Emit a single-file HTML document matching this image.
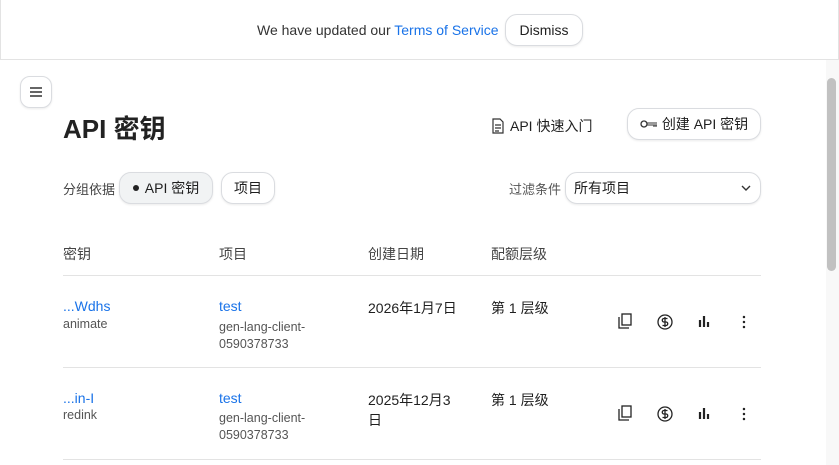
<!DOCTYPE html>
<html><head><meta charset="utf-8"><style>
*{box-sizing:border-box;margin:0;padding:0}
body{width:839px;height:465px;overflow:hidden;background:#fff;font-family:"Liberation Sans","Noto Sans CJK SC",sans-serif;color:#1f1f1f;position:relative}
.a{position:absolute}
.banner{left:0;top:0;width:839px;height:60px;border:1px solid #e3e3e3;border-top:none;background:#fff}
.btn{position:absolute;border:1px solid #dadce0;border-radius:12px;background:#fff;font-size:14px;display:flex;align-items:center;justify-content:center;box-shadow:0 1px 2px rgba(0,0,0,.08)}
.link{color:#1a73e8}
.t{font-size:14px}
.g{color:#444}
.s{font-size:12.5px;color:#555}
.line{position:absolute;left:63px;width:698px;height:1px;background:#e3e3e3}
</style></head><body>
<div class="a banner"></div>
<div class="a t" style="left:257px;top:22px;color:#333">We have updated our <span class="link">Terms of Service</span></div>
<div class="btn" style="left:505px;top:14px;width:78px;height:32px">Dismiss</div>
<div class="a" style="left:826px;top:60px;width:13px;height:405px;background:#f8f8f8"></div>
<div class="a" style="left:827px;top:78px;width:9px;height:193px;background:#c1c1c1;border-radius:5px"></div>
<div class="btn" style="left:20px;top:76px;width:32px;height:32px;border-radius:10px"><svg width="14" height="10"><path d="M1 1h12M1 5h12M1 9h12" stroke="#333" stroke-width="1.4"/></svg></div>
<div class="a" style="left:63px;top:109px;font-size:26px;font-weight:bold;color:#222">API 密钥</div>
<div class="a t" style="left:491px;top:116px;display:flex;align-items:center;gap:5px"><svg width="14" height="16"><path d="M2 1h7l3 3v11H2z M4 7h6M4 10h6M4 13h4" fill="none" stroke="#333" stroke-width="1.2"/></svg>API 快速入门</div>
<div class="btn" style="left:627px;top:108px;width:134px;height:32px;gap:4px"><svg width="18" height="10"><circle cx="4" cy="5" r="3" fill="none" stroke="#333" stroke-width="1.3"/><path d="M7 4h10M7 6h10M14 6v2M16 6v2" stroke="#333" stroke-width="1.1" fill="none"/></svg>创建 API 密钥</div>
<div class="a" style="left:63px;top:179px;font-size:13px;color:#444">分组依据</div>
<div class="btn" style="left:119px;top:172px;width:94px;height:32px;background:#f1f3f4;gap:6px"><span style="width:6px;height:6px;border-radius:3px;background:#222;display:inline-block"></span>API 密钥</div>
<div class="btn" style="left:221px;top:172px;width:54px;height:32px">项目</div>
<div class="a" style="left:509px;top:179px;font-size:13px;color:#555">过滤条件</div>
<div class="btn" style="left:565px;top:172px;width:196px;height:32px;justify-content:space-between;padding:0 8px">所有项目<svg width="12" height="8"><path d="M2 2l4 4 4-4" fill="none" stroke="#333" stroke-width="1.4"/></svg></div>
<div class="a t g" style="left:63px;top:244px">密钥</div>
<div class="a t g" style="left:219px;top:244px">项目</div>
<div class="a t g" style="left:368px;top:244px">创建日期</div>
<div class="a t g" style="left:491px;top:244px">配额层级</div>
<div class="line" style="top:275px"></div>
<div class="a t link" style="left:63px;top:298px">...Wdhs</div>
<div class="a s" style="left:63px;top:317px">animate</div>
<div class="a t link" style="left:219px;top:298px">test</div>
<div class="a s" style="left:219px;top:319px;line-height:17px">gen-lang-client-<br>0590378733</div>
<div class="a t" style="left:368px;top:298px">2026年1月7日</div>
<div class="a t" style="left:491px;top:298px">第 1 层级</div>
<div class="line" style="top:367px"></div>
<div class="a t link" style="left:63px;top:390px">...in-I</div>
<div class="a s" style="left:63px;top:408px">redink</div>
<div class="a t link" style="left:219px;top:390px">test</div>
<div class="a s" style="left:219px;top:410px;line-height:17px">gen-lang-client-<br>0590378733</div>
<div class="a t" style="left:368px;top:390px;line-height:20px">2025年12月3<br>日</div>
<div class="a t" style="left:491px;top:390px">第 1 层级</div>
<div class="line" style="top:459px"></div>
<svg class="a" style="left:610px;top:310px" width="150" height="120">
<g id="r" fill="none" stroke="#222" stroke-width="1.3">
<rect x="12" y="4" width="9" height="11"/><path d="M9 7v11h10"/>
<circle cx="55" cy="12" r="7"/><path d="M57.5 8.5h-3.5a1.7 1.7 0 0 0 0 3.5h2a1.7 1.7 0 0 1 0 3.5h-3.5M55 7v10"/>
<path d="M90 10v7M94 6v11M98 12v5" stroke-width="2.2"/>
<circle cx="134" cy="7" r=".6" fill="#222"/><circle cx="134" cy="12" r=".6" fill="#222"/><circle cx="134" cy="17" r=".6" fill="#222"/>
</g>
<use href="#r" y="92"/>
</svg>
</body></html>
